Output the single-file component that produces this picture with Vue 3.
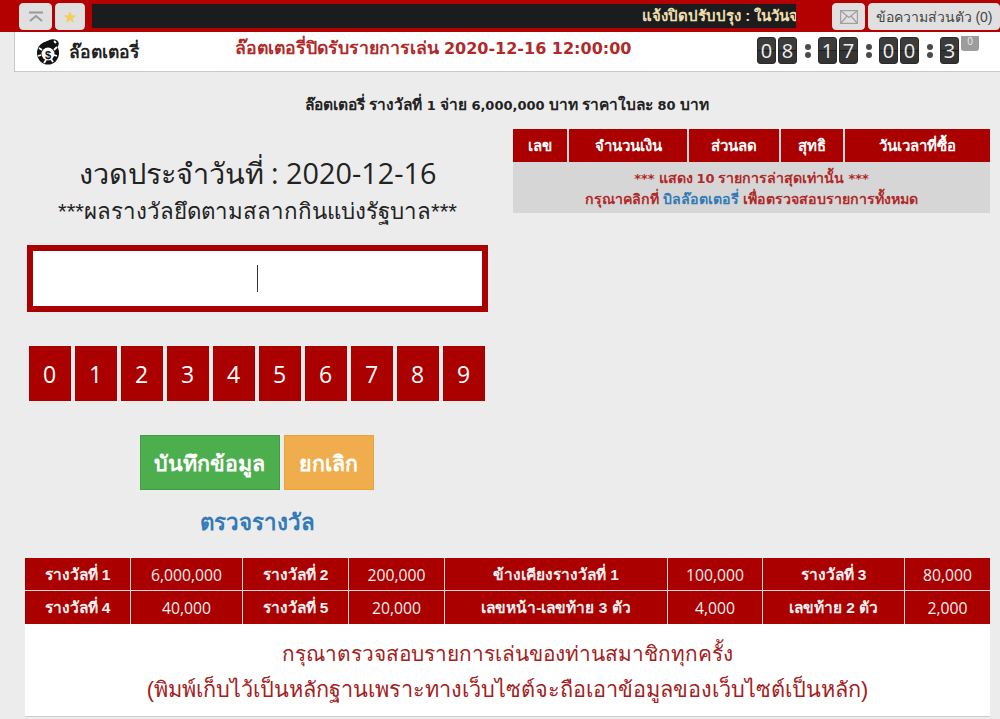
<script setup>
const keys = ['0','1','2','3','4','5','6','7','8','9']
const heads = ['เลข','จำนวนเงิน','ส่วนลด','สุทธิ','วันเวลาที่ซื้อ']
const prizes = [
  'รางวัลที่ 1','6,000,000','รางวัลที่ 2','200,000','ข้างเคียงรางวัลที่ 1','100,000','รางวัลที่ 3','80,000',
  'รางวัลที่ 4','40,000','รางวัลที่ 5','20,000','เลขหน้า-เลขท้าย 3 ตัว','4,000','เลขท้าย 2 ตัว','2,000'
]
</script>

<template>
  <div class="page">
    <header class="topbar">
      <button class="tool up" aria-label="ขึ้นบน">
        <svg width="18" height="12" viewBox="0 0 18 12" fill="none" stroke="#9a9a9a" stroke-width="2"><path d="M2 1.500h14M3 10l6-5 6 5"/></svg>
      </button>
      <button class="tool star" aria-label="รายการโปรด">
        <svg width="14" height="14" viewBox="0 0 24 24" fill="#f2cf5a"><path d="M12 2l3 7 7.500 .6-5.700 4.900 1.800 7.300L12 18l-6.600 3.800 1.800-7.300L1.500 9.600 9 9z"/></svg>
      </button>
      <div class="ticker"><span>แจ้งปิดปรับปรุง : ในวันจ</span></div>
      <button class="tool mail" aria-label="ข้อความ">
        <svg width="18" height="14" viewBox="0 0 18 14" fill="none" stroke="#a0a0a0" stroke-width="1.200"><rect x=".6" y=".6" width="16.800" height="12.800"/><path d="M1 1l8 6.500L17 1M1 13l6-7M17 13l-6-7"/></svg>
      </button>
      <button class="tool inbox">ข้อความส่วนตัว (0)</button>
    </header>

    <section class="subhead">
      <div class="brand">
        <svg class="chip" width="24" height="27" viewBox="0 0 24 27">
          <ellipse cx="12" cy="15" rx="11" ry="11.500" fill="#111"/>
          <ellipse cx="15" cy="7" rx="8" ry="5.500" fill="#111" transform="rotate(-20 15 7)"/>
          <path d="M11 2l3-1M18 3l2 2M3 10l3 2M2 18l3-1M8 25l2-3M17 24l-2-3M21 18l-3-1M21 9l-3 3" stroke="#fff" stroke-width="1.800"/>
          <circle cx="12" cy="16" r="6.500" fill="#fff"/>
          <text x="12" y="20.500" text-anchor="middle" class="chip-text">$</text>
        </svg>
        <span>ล๊อตเตอรี่</span>
      </div>
      <div class="closing">ล๊อตเตอรี่ปิดรับรายการเล่น <span class="num">2020-12-16 12:00:00</span></div>
      <div class="clock">
        <b class="tile">0</b><b class="tile">8</b><i class="sep"></i>
        <b class="tile">1</b><b class="tile">7</b><i class="sep"></i>
        <b class="tile">0</b><b class="tile">0</b><i class="sep"></i>
        <b class="tile">3</b>
        <b class="faded">0</b>
      </div>
    </section>

    <p class="rate">ล๊อตเตอรี่ รางวัลที่ <span class="num">1</span> จ่าย <span class="num">6,000,000</span> บาท ราคาใบละ <span class="num">80</span> บาท</p>

    <main class="columns">
      <section class="left">
        <h1>งวดประจำวันที่ : 2020-12-16</h1>
        <h2>***ผลรางวัลยึดตามสลากกินแบ่งรัฐบาล***</h2>
        <div class="entry"><span class="caret"></span></div>
        <div class="keys">
          <button v-for="k in keys" :key="k" class="key">{{ k }}</button>
        </div>
        <div class="actions">
          <button class="save">บันทึกข้อมูล</button>
          <button class="cancel">ยกเลิก</button>
        </div>
        <a class="check">ตรวจรางวัล</a>
      </section>

      <section class="right">
        <div class="heads">
          <div v-for="h in heads" :key="h" class="head">{{ h }}</div>
        </div>
        <div class="note">
          <div><span class="num">***</span> แสดง <span class="num">10</span> รายการล่าสุดเท่านั้น <span class="num">***</span></div>
          <div>กรุณาคลิกที่ <a>บิลล๊อตเตอรี่</a> เพื่อตรวจสอบรายการทั้งหมด</div>
        </div>
      </section>
    </main>

    <section class="prizes">
      <div class="prize-grid">
        <div v-for="(p, i) in prizes" :key="i" class="prize" :class="{ label: i % 2 === 0 }">{{ p }}</div>
      </div>
      <div class="warning">
        <div>กรุณาตรวจสอบรายการเล่นของท่านสมาชิกทุกครั้ง</div>
        <div class="warning-sub">(พิมพ์เก็บไว้เป็นหลักฐานเพราะทางเว็บไซต์จะถือเอาข้อมูลของเว็บไซต์เป็นหลัก)</div>
      </div>
    </section>
  </div>
</template>

<style>
html, body { margin: 0; background: #ececec; }
</style>

<style scoped>
.page {
  width: 1000px;
  height: 719px;
  overflow: hidden;
  background: #ececec;
  font-family: "Liberation Sans", "Noto Sans", sans-serif;
  color: #222;
}
button { font-family: inherit; padding: 0; cursor: pointer; }

.topbar {
  height: 32px;
  box-sizing: border-box;
  background: #b30000;
  display: flex;
  align-items: flex-start;
  padding: 3px 0 0 19px;
}
.tool {
  height: 27px;
  border: 1px solid #e6dcdc;
  border-radius: 4px;
  background: #e0e0e0;
  display: flex;
  align-items: center;
  justify-content: center;
}
.up { width: 33px; margin-right: 3px; }
.star { width: 30px; margin-right: 7px; }
.ticker {
  width: 704px;
  height: 24px;
  margin-top: 1px;
  background: #1c1c1e;
  color: #f0e0b0;
  font-size: 15px;
  font-weight: bold;
  line-height: 24px;
  white-space: nowrap;
  overflow: hidden;
  padding-left: 550px;
  box-sizing: border-box;
}
.mail { width: 33px; margin-left: 36px; }
.inbox {
  width: 132px;
  margin-left: 3px;
  font-size: 14px;
  color: #444;
  white-space: nowrap;
}

.subhead {
  height: 40px;
  margin-left: 14px;
  box-sizing: border-box;
  background: #fff;
  border-left: 1px solid #c8c8c8;
  border-bottom: 1px solid #c8c8c8;
  display: flex;
  align-items: center;
}
.brand {
  width: 220px;
  display: flex;
  align-items: center;
  gap: 9px;
  padding-left: 21px;
  box-sizing: border-box;
  font-size: 17.500px;
  font-weight: bold;
  color: #222;
}
.chip-text { font: bold 11px "Liberation Sans", sans-serif; fill: #111; }
.closing {
  margin-bottom: 7px;
  font-size: 17.700px;
  font-weight: bold;
  color: #b02a2a;
  white-space: nowrap;
}
.closing .num { font-family: "DejaVu Sans", sans-serif; font-size: 16px; }
.clock {
  margin-left: auto;
  margin-right: 21px;
  display: flex;
  align-items: flex-start;
  gap: 2px;
  height: 39px;
  padding-top: 5px;
  box-sizing: border-box;
}
.tile {
  width: 19px;
  height: 27px;
  box-sizing: border-box;
  border-radius: 3px;
  border: 1px solid #2a2a2a;
  background: linear-gradient(#3c3c3c 0 49%, #1e1e1e 49% 53%, #343434 53%);
  color: #f2f2f2;
  font-family: "Open Sans", sans-serif;
  font-size: 20px;
  font-weight: normal;
  line-height: 25px;
  text-align: center;
}
.faded {
  width: 18px;
  height: 15px;
  margin-top: -1px;
  background: #9c9c9c;
  border-radius: 0 0 3px 3px;
  color: #eee;
  font-family: "Open Sans", sans-serif;
  font-size: 10px;
  font-weight: normal;
  line-height: 10px;
  text-align: center;
}
.sep {
  width: 17px;
  height: 27px;
  display: flex;
  flex-direction: column;
  align-items: center;
  justify-content: center;
  gap: 2px;
}
.sep::before, .sep::after {
  content: "";
  width: 6px;
  height: 6px;
  border-radius: 50%;
  background: #4a4a4a;
}

.rate {
  margin: 0;
  padding-top: 25px;
  height: 32px;
  padding-left: 14px;
  text-align: center;
  font-size: 15.500px;
  font-weight: bold;
  line-height: 16px;
  color: #222;
}
.rate .num { font-family: "DejaVu Sans", sans-serif; font-size: 13px; }

.columns {
  display: flex;
  align-items: flex-start;
  padding-left: 27px;
}
.left {
  width: 461px;
  display: flex;
  flex-direction: column;
  align-items: center;
}
h1 {
  margin: 25px 0 0;
  font-family: "Open Sans", sans-serif;
  font-size: 28.800px;
  font-weight: normal;
  line-height: 38px;
  color: #222;
}
h2 {
  margin: 0;
  font-size: 22.300px;
  font-weight: normal;
  line-height: 39px;
  color: #222;
}
.entry {
  width: 100%;
  height: 67px;
  margin-top: 14px;
  box-sizing: border-box;
  border: 6px solid #aa0000;
  background: #fff;
  display: flex;
  align-items: center;
  justify-content: center;
}
.caret { width: 1px; height: 27px; background: #333; }
.keys {
  display: flex;
  justify-content: center;
  gap: 4px;
  margin: 34px 2px 0 0;
}
.key {
  width: 42px;
  height: 55px;
  border: 0;
  background: #aa0000;
  color: #fff;
  font-family: "Open Sans", sans-serif;
  font-size: 23px;
}
.actions {
  display: flex;
  gap: 4px;
  margin: 34px 2px 0 0;
}
.save, .cancel {
  height: 55px;
  color: #fff;
  font-size: 21.400px;
  font-weight: bold;
}
.save { width: 140px; background: #4cae4c; border: 1px solid #439c43; }
.cancel { width: 90px; background: #f0ad4e; border: 1px solid #eea236; }
.check {
  margin-top: 20px;
  font-size: 22.300px;
  font-weight: bold;
  line-height: 26px;
  color: #337ab7;
}

.right {
  width: 477px;
  margin-left: 25px;
}
.heads {
  display: grid;
  grid-template-columns: 54px 118px 90px 62px 145px;
  column-gap: 2px;
  background: #e8d8d8;
}
.head {
  height: 33px;
  background: #aa0000;
  color: #fff;
  font-size: 15px;
  font-weight: bold;
  line-height: 33px;
  text-align: center;
}
.note {
  height: 51px;
  box-sizing: border-box;
  padding-top: 6px;
  background: #d6d6d6;
  color: #b02a2a;
  font-size: 14.200px;
  font-weight: bold;
  line-height: 20px;
  text-align: center;
}
.note .num { font-family: "DejaVu Sans", sans-serif; font-size: 13px; }
.note a { color: #337ab7; }

.prizes {
  margin: 22px 10px 0 25px;
}
.prize-grid {
  display: grid;
  grid-template-columns: 105px 111px 105px 95px 222px 94px 141px 85px;
  grid-template-rows: 32px 33px;
  gap: 1px;
  background: #e6d8d8;
}
.prize {
  background: #aa0000;
  color: #f5f0f0;
  font-family: "Open Sans", sans-serif;
  font-size: 15.700px;
  line-height: 34px;
  text-align: center;
  white-space: nowrap;
}
.prize.label {
  font-family: "Liberation Sans", sans-serif;
  font-size: 15.500px;
  font-weight: bold;
}
.warning {
  height: 93px;
  box-sizing: border-box;
  padding-top: 12px;
  background: #fff;
  border-bottom: 1px solid #ccc;
  color: #a32020;
  font-size: 20.800px;
  line-height: 36px;
  text-align: center;
  white-space: nowrap;
}
.warning-sub { font-size: 21.700px; }
</style>
